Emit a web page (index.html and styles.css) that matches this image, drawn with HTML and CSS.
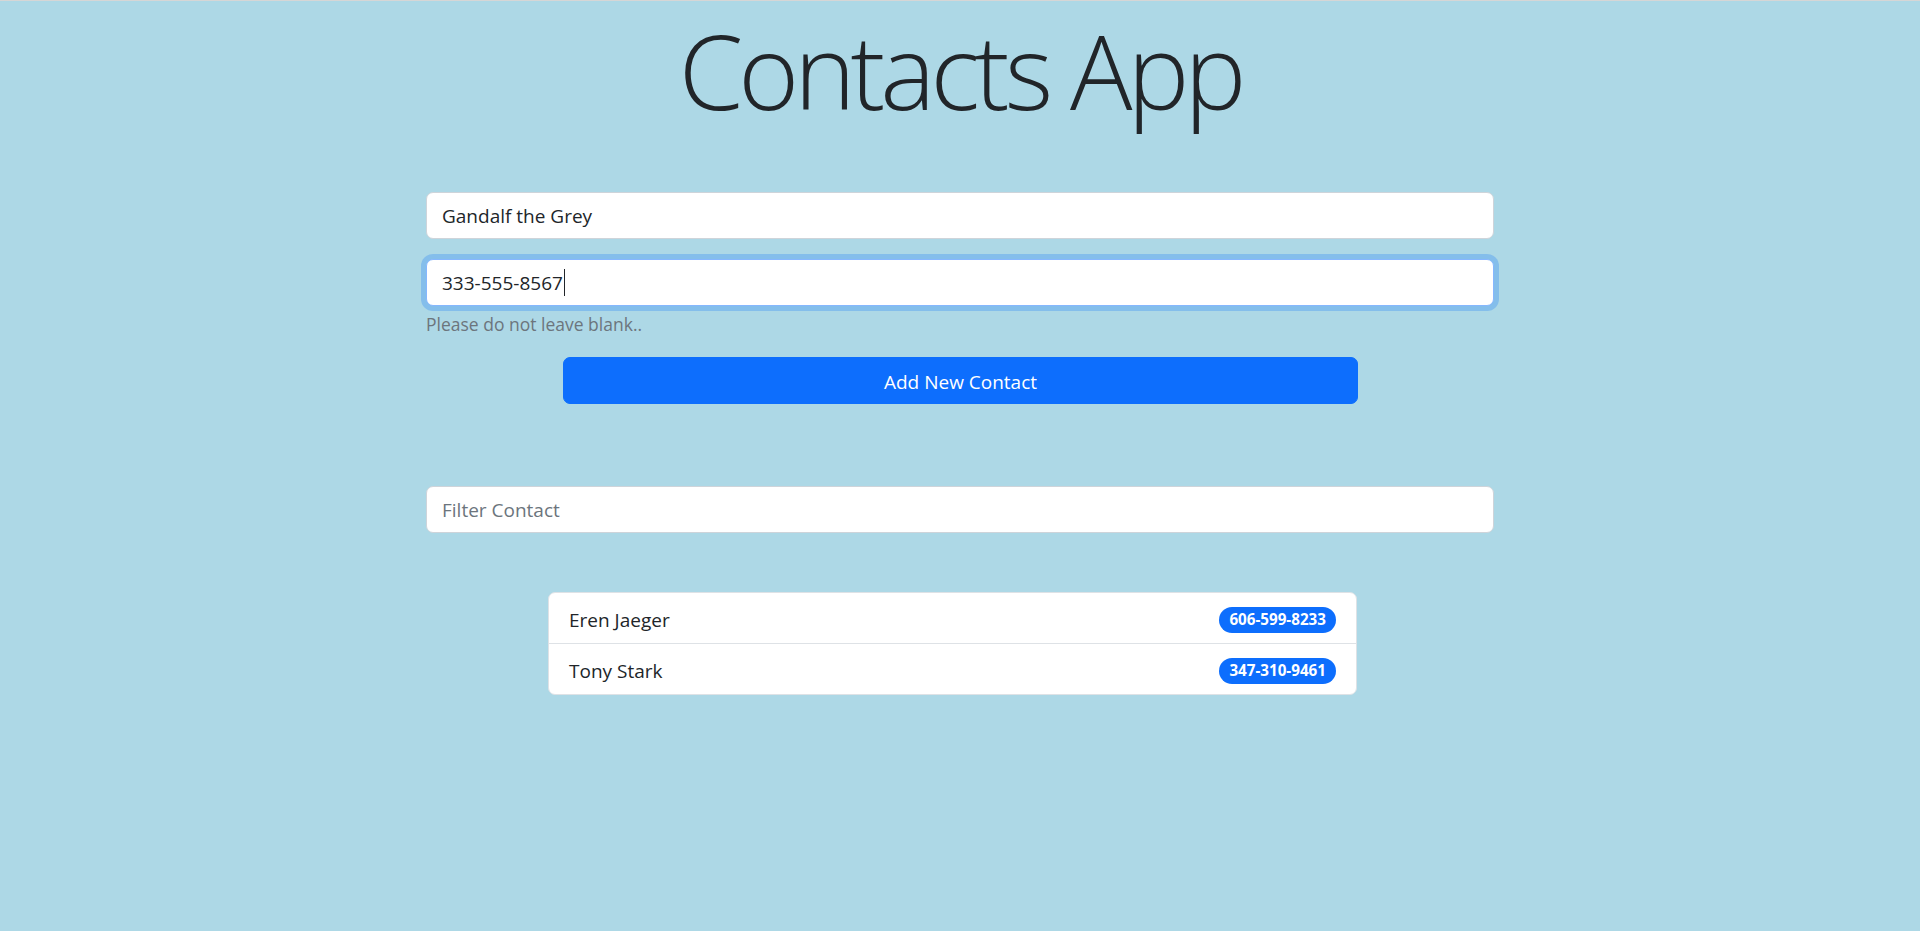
FILE: index.html
```html
<!DOCTYPE html>
<html lang="en">
<head>
<meta charset="utf-8">
<title>Contacts App</title>
<link rel="stylesheet" href="styles.css">
</head>
<body>
<div class="topline"></div>
<main class="app">
  <h1 class="title">Contacts App</h1>
  <form class="contact-form">
    <input class="field" type="text" value="Gandalf the Grey">
    <div class="field field-focus">333-555-8567<span class="caret"></span></div>
    <div class="help">Please do not leave blank..</div>
    <button class="btn-add" type="button">Add New Contact</button>
  </form>
  <input class="field field-filter" type="text" placeholder="Filter Contact">
  <ul class="contact-list">
    <li class="contact-item"><span class="name">Eren Jaeger</span><span class="badge">606-599-8233</span></li>
    <li class="contact-item"><span class="name">Tony Stark</span><span class="badge">347-310-9461</span></li>
  </ul>
</main>
</body>
</html>
```

FILE: styles.css
```css
* { box-sizing: border-box; }
html, body { margin: 0; padding: 0; }
body {
  background: #add8e6;
  color: #212529;
  font-family: "Open Sans", "Noto Sans", sans-serif;
  font-size: 19px;
  min-height: 931px;
}
.topline { height: 1px; background: #d6d6d6; }
.app {
  width: 1068px;
  margin: 0 auto;
  display: flex;
  flex-direction: column;
}
.title {
  margin: -1px 0 52px;
  font-size: 104px;
  font-weight: 300;
  line-height: 140px;
  text-align: center;
  letter-spacing: -5px;
}
.contact-form { display: flex; flex-direction: column; margin: 0; }
.field {
  display: block;
  width: 100%;
  height: 47px;
  padding: 7.5px 15px;
  font-family: inherit;
  font-size: 19px;
  line-height: 30px;
  color: #212529;
  background: #fff;
  border: 1px solid #ced4da;
  border-radius: 7px;
  outline: none;
  margin: 0;
}
.field::placeholder { color: #6c757d; }
.field-focus {
  margin-top: 20px;
  border-color: #86b7fe;
  box-shadow: 0 0 0 5px rgba(13, 110, 253, 0.25);
  display: flex;
  align-items: center;
}
.caret {
  display: inline-block;
  width: 1px;
  height: 27px;
  background: #212529;
  margin-left: 1px;
}
.help {
  margin-top: 5px;
  font-size: 17.5px;
  line-height: 26px;
  color: #6c757d;
}
.btn-add {
  margin: 20px 0 0 137px;
  width: 795px;
  height: 47px;
  padding: 9px 15px 6px;
  font-family: inherit;
  font-size: 19px;
  line-height: 30px;
  color: #fff;
  background: #0d6efd;
  border: 1px solid #0d6efd;
  border-radius: 7px;
}
.field-filter { margin-top: 82px; }
.contact-list {
  list-style: none;
  margin: 59px 0 0 122px;
  padding: 0;
  width: 809px;
  background: #fff;
  border: 1px solid #dee2e6;
  border-radius: 7px;
}
.contact-item {
  display: flex;
  justify-content: space-between;
  align-items: center;
  padding: 12px 20px 8px;
  line-height: 30px;
}
.contact-item + .contact-item { border-top: 1px solid #dee2e6; }
.badge {
  font-size: 15.2px;
  font-weight: 700;
  line-height: 1;
  padding: 5px 10px;
  color: #fff;
  background: #0d6efd;
  border-radius: 50rem;
}
```
